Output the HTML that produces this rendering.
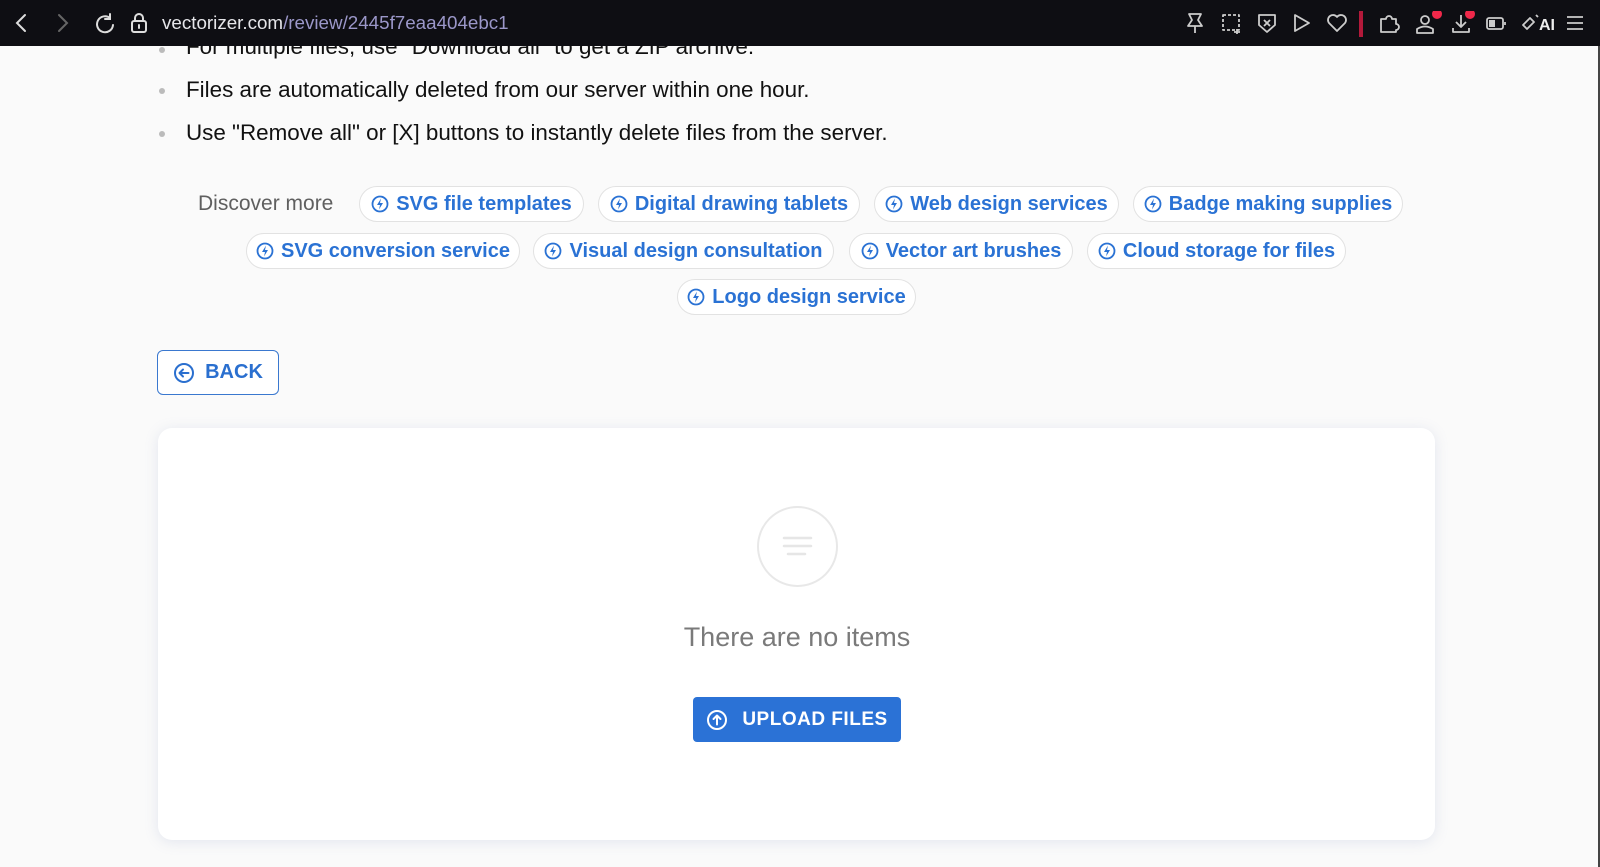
<!DOCTYPE html>
<html><head><meta charset="utf-8"><style>
*{margin:0;padding:0;box-sizing:border-box}
body{width:1600px;height:867px;overflow:hidden;background:#fafafa;font-family:"Liberation Sans",Arial,sans-serif;position:relative}
.top{position:absolute;left:0;top:0;width:1600px;height:46px;background:#0e0e13;z-index:10}
.url{position:absolute;left:162px;top:12px;font-size:18.8px;color:#e6e6ea}
.url span{color:#9b97c9}
.rline{position:absolute;right:0;top:46px;width:2px;height:821px;background:#444}
.li{position:absolute;left:186px;font-size:22.4px;color:#111}
.dot{position:absolute;left:159px;width:6px;height:6px;border-radius:3px;background:#bbb}
.chip{position:absolute;height:36px;border:1px solid #e2e2e2;border-radius:18px;background:#fff;color:#2a72d4;font-weight:bold;font-size:20px;display:flex;align-items:center;justify-content:center;gap:7px;white-space:nowrap}
.chip svg{flex:none}
.disc{position:absolute;left:190px;top:186px;height:36px;padding:0 8px;background:#fafafa;font-size:21px;color:#5f5f5f;display:flex;align-items:center}
.back{position:absolute;left:157px;top:350px;width:122px;height:45px;border:1.5px solid #3a78cf;border-radius:6px;display:flex;align-items:center;justify-content:center;gap:10px;color:#2a6fcf;font-weight:bold;font-size:20px;background:#fff}
.card{position:absolute;left:158px;top:428px;width:1277px;height:412px;background:#fff;border-radius:14px;box-shadow:0 2px 14px rgba(120,140,190,.18)}
.circ{position:absolute;left:757px;top:506px;width:81px;height:81px;border:2px solid #e8e8e8;border-radius:50%}
.none{position:absolute;left:0;width:1594px;top:622px;text-align:center;font-size:27px;color:#7a7a7a}
.up{position:absolute;left:693px;top:697px;width:208px;height:45px;background:#2b72d6;border-radius:4px;color:#fff;font-weight:bold;font-size:19px;display:flex;align-items:center;justify-content:center;gap:14px;letter-spacing:.5px}
</style></head><body>
<div class="top">
<svg style="position:absolute;left:12px;top:12px" width="140" height="22" fill="none" stroke-width="2" stroke-linecap="round">
<path d="M13 3 L5 11 L13 19" stroke="#ddd"/>
<path d="M47 3 L55 11 L47 19" stroke="#666"/>
<path d="M98 6 A8 8 0 1 0 101 13 M98 2 V7 H93" stroke="#ddd"/>
<rect x="120" y="9" width="14" height="11" rx="2" stroke="#ddd"/><path d="M123 9 V6 A4 4 0 0 1 131 6 V9 M127 13 V16" stroke="#ddd"/>
</svg>
<div class="url">vectorizer.com<span>/review/2445f7eaa404ebc1</span></div>
<svg style="position:absolute;left:1185px;top:11px" width="415" height="26" fill="none" stroke="#ccc" stroke-width="1.8" stroke-linejoin="round">
<path d="M4 3 H16 L13 9 L17 15 H3 L7 9 Z M10 15 V22"/>
<rect x="38" y="4" width="16" height="15" stroke-dasharray="3 2"/><path d="M52 18 V23 M49 21 H55"/>
<path d="M74 4 H90 V14 L82 21 L74 14 Z M79 9 L85 15 M85 9 L79 15"/>
<path d="M110 4 L124 12 L110 20 Z"/>
<path d="M152 20 L144 12 A4.5 4.5 0 0 1 152 6 A4.5 4.5 0 0 1 160 12 Z"/>
<rect x="174" y="0" width="4" height="26" fill="#b3193a" stroke="none"/>
<path d="M196 8 H201 A3 3 0 0 1 207 8 H211 V13 A3 3 0 0 1 211 19 V21 H196 Z"/>
<circle cx="240" cy="9" r="4"/><path d="M232 22 V18 Q240 13 248 18 V22 Z"/>
<circle cx="252" cy="3" r="5" fill="#f0284a" stroke="none"/>
<path d="M276 4 V16 M271 11 L276 16 L281 11 M268 17 V21 H284 V17"/>
<circle cx="285" cy="3" r="5" fill="#f0284a" stroke="none"/>
<rect x="302" y="7" width="16" height="11" rx="2"/><rect x="304" y="9" width="6" height="7" fill="#ccc" stroke="none"/><path d="M320 11 V14"/>
<path d="M338 14 L345 7 L349 11 L342 18 Z M351 4 L353 6"/>
<text x="354" y="19" fill="#eee" stroke="none" font-family="Liberation Sans" font-weight="bold" font-size="16">AI</text>
<path d="M382 6 H398 M382 12 H398 M382 18 H398"/>
</svg>
</div>
<div class="rline"></div>

<div class="dot" style="top:47px"></div><div class="li" style="top:34px">For multiple files, use "Download all" to get a ZIP archive.</div>
<div class="dot" style="top:88px"></div><div class="li" style="top:77px">Files are automatically deleted from our server within one hour.</div>
<div class="dot" style="top:131px"></div><div class="li" style="top:120px">Use "Remove all" or [X] buttons to instantly delete files from the server.</div>

<div class="disc">Discover more</div>
<svg width="0" height="0" style="position:absolute"><defs><symbol id="b" viewBox="0 0 18 18"><circle cx="9" cy="9" r="7.5" fill="none" stroke="#2a72d4" stroke-width="1.8"/><path d="M10 3.5 L6 10 H9 L8 14.5 L12 8 H9 Z" fill="#2a72d4"/></symbol></defs></svg>
<div class="chip" style="left:359px;top:186px;width:225px"><svg width="18" height="18"><use href="#b"/></svg>SVG file templates</div>
<div class="chip" style="left:598px;top:186px;width:262px"><svg width="18" height="18"><use href="#b"/></svg>Digital drawing tablets</div>
<div class="chip" style="left:874px;top:186px;width:245px"><svg width="18" height="18"><use href="#b"/></svg>Web design services</div>
<div class="chip" style="left:1133px;top:186px;width:270px"><svg width="18" height="18"><use href="#b"/></svg>Badge making supplies</div>
<div class="chip" style="left:246px;top:233px;width:274px"><svg width="18" height="18"><use href="#b"/></svg>SVG conversion service</div>
<div class="chip" style="left:533px;top:233px;width:301px"><svg width="18" height="18"><use href="#b"/></svg>Visual design consultation</div>
<div class="chip" style="left:849px;top:233px;width:224px"><svg width="18" height="18"><use href="#b"/></svg>Vector art brushes</div>
<div class="chip" style="left:1087px;top:233px;width:259px"><svg width="18" height="18"><use href="#b"/></svg>Cloud storage for files</div>
<div class="chip" style="left:677px;top:279px;width:239px"><svg width="18" height="18"><use href="#b"/></svg>Logo design service</div>

<div class="back"><svg width="22" height="22" fill="none" stroke="#2a6fcf" stroke-width="2" stroke-linecap="round" stroke-linejoin="round"><circle cx="11" cy="11" r="9"/><path d="M15.5 11 H6.5 M10 7.5 L6.5 11 L10 14.5"/></svg>BACK</div>

<div class="card"></div>
<div class="circ"><svg width="77" height="77" style="position:absolute;left:0;top:0" stroke="#e6e6e6" stroke-width="2.5" stroke-linecap="round"><path d="M25 30 H52 M25 38 H52 M29 46 H46"/></svg></div>
<div class="none">There are no items</div>
<div class="up"><svg width="22" height="22" fill="none" stroke="#fff" stroke-width="2" stroke-linecap="round" stroke-linejoin="round"><circle cx="11" cy="11" r="9"/><path d="M11 15.5 V6.5 M7.5 10 L11 6.5 L14.5 10"/></svg>UPLOAD FILES</div>
</body></html>
